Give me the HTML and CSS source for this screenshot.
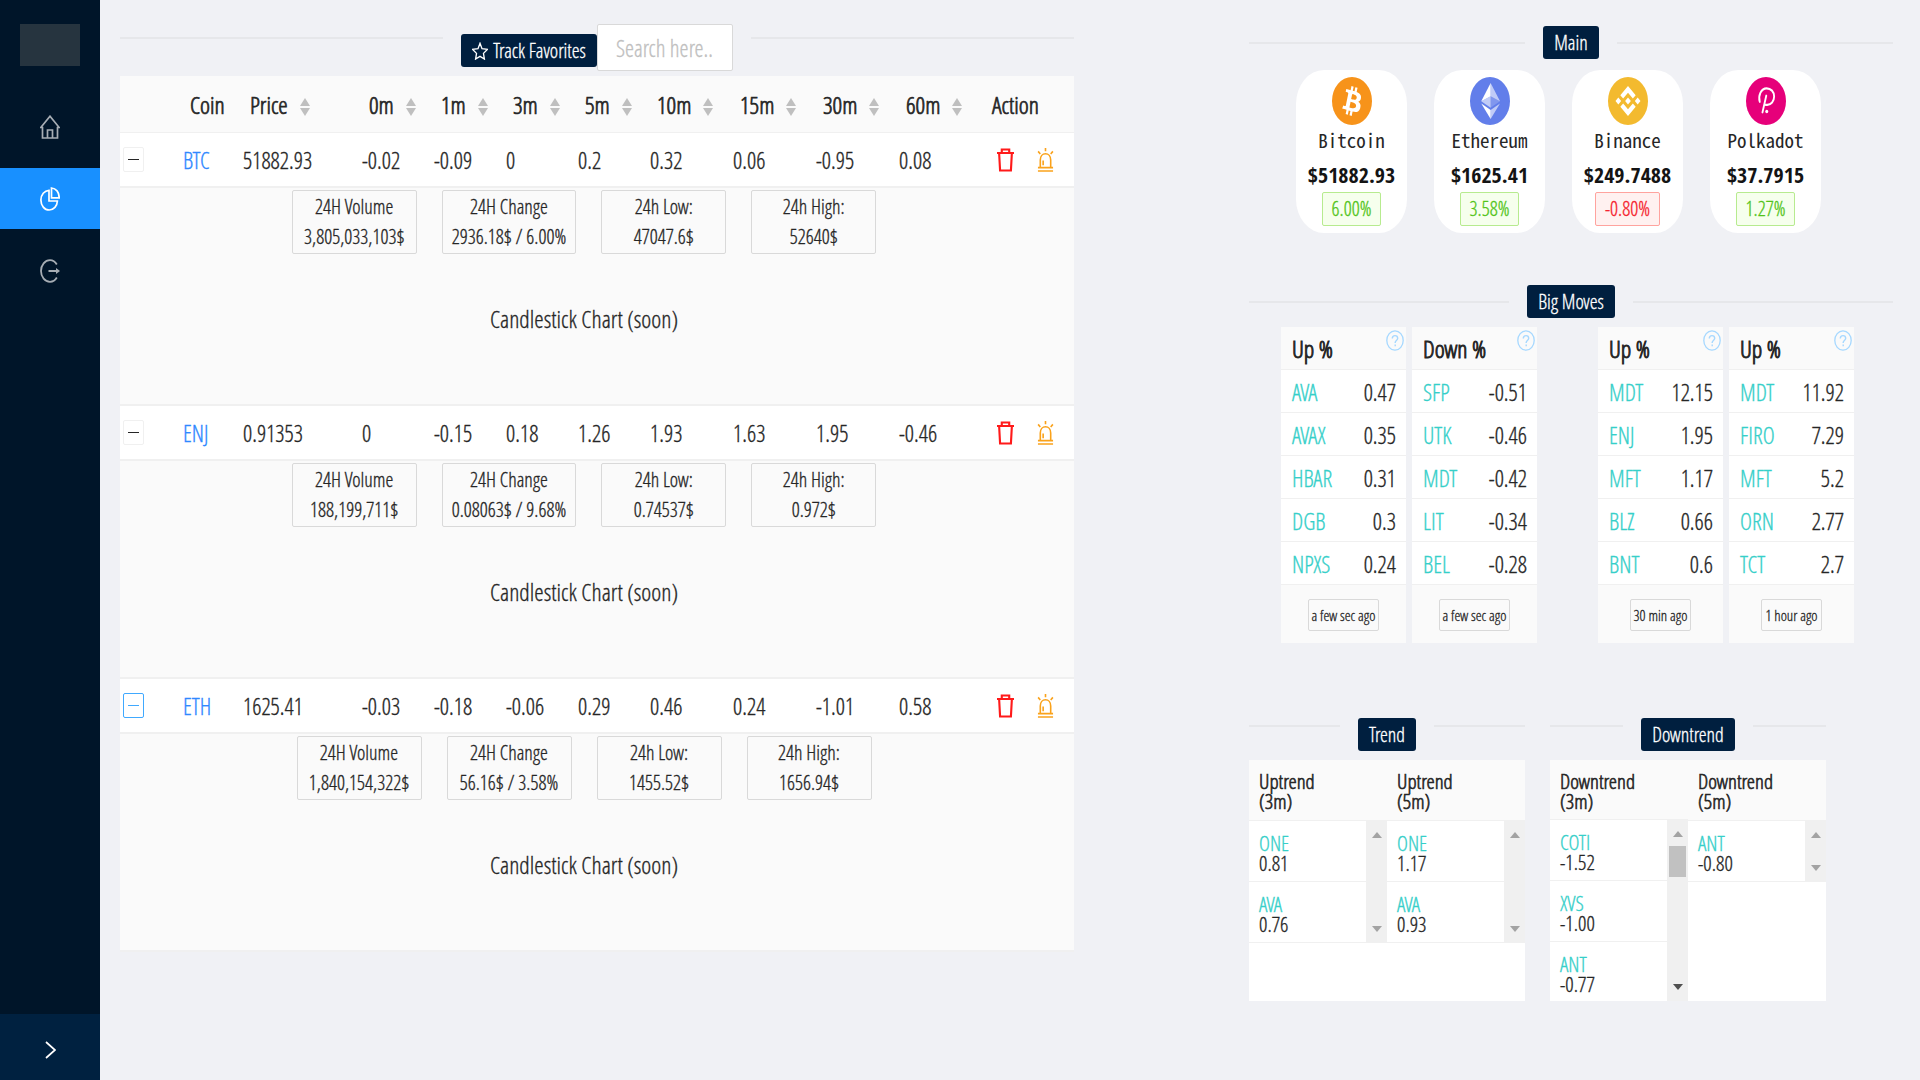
FILE: index.html
```html
<!DOCTYPE html>
<html lang="en">
<head>
<meta charset="utf-8">
<title>Coin Tracker</title>
<link rel="stylesheet" href="styles.css">
</head>
<body>
<svg class="defs" aria-hidden="true">
  <symbol id="i-sort" viewBox="0 0 10 18" preserveAspectRatio="none"><path d="M5 0l5 8H0zM5 18l5-8H0z"/></symbol>
  <symbol id="i-trash" viewBox="0 0 16 24" preserveAspectRatio="none"><path d="M0 5h16M4.500 5V1.500h7V5M2 5l.9 17.500h10.200L14 5" fill="none" stroke="currentColor" stroke-width="2"/></symbol>
  <symbol id="i-siren" viewBox="0 0 18 25" preserveAspectRatio="none"><path d="M3.500 20v-7.500C3.500 8.500 5.800 6 9 6s5.500 2.500 5.500 6.500V20M1 20.500h16M1 24h16M6.500 13v5M9 0v3.500M1.200 3.500l2.300 2.700M16.800 3.500l-2.300 2.700" fill="none" stroke="currentColor" stroke-width="1.700"/></symbol>
  <symbol id="i-help" viewBox="0 0 18 21" preserveAspectRatio="none"><ellipse cx="9" cy="10.500" rx="8.200" ry="9.700" fill="none" stroke="currentColor" stroke-width="1.300"/><path d="M6.300 8.600c0-1.900 1.100-3 2.700-3s2.700 1.100 2.700 2.700c0 2-2.500 2.300-2.500 4.200v.6M9.200 14.600v1.700" fill="none" stroke="currentColor" stroke-width="1.400"/></symbol>
</svg>
<div class="app">
  <aside class="sidebar">
    <div class="logo"></div>
    <nav class="menu">
      <a href="#home" aria-label="Home"><svg viewBox="0 0 20 24" preserveAspectRatio="none"><path d="M.8 12.500L10 1.200l9.200 11.300h-1.700V23h-15V12.500zM7.500 23v-8h5v8" fill="none" stroke="currentColor" stroke-width="1.700"/></svg></a>
      <a href="#stats" class="active" aria-label="Statistics"><svg viewBox="0 0 20 24" preserveAspectRatio="none"><path d="M9 3.300C4.400 3.500.9 7.600.9 13c0 5.600 3.600 10 8.300 10 4.500 0 8-3.900 8.200-9H9zM11.500 1v9.800h7.700C19.200 5.200 16 1.200 11.500 1z" fill="none" stroke="currentColor" stroke-width="1.700"/></svg></a>
      <a href="#logout" aria-label="Log out"><svg viewBox="0 0 20 24" preserveAspectRatio="none"><path d="M16.800 5.500C15.200 2.700 12.800 1.200 10 1.200 5 1.200 1 6 1 12s4 10.800 9 10.800c2.800 0 5.200-1.500 6.800-4.300M8.500 12h9" fill="none" stroke="currentColor" stroke-width="1.800"/><path d="M16 9l4 3-4 3z" fill="currentColor"/></svg></a>
    </nav>
    <button class="trigger" aria-label="Expand menu"><svg viewBox="0 0 11 18"><path d="M1 1l9 8-9 8" fill="none" stroke="currentColor" stroke-width="1.700"/></svg></button>
  </aside>

  <main class="main">
    <section class="tracker">
      <div class="bar">
        <button class="tag"><svg class="star" viewBox="0 0 24 28" preserveAspectRatio="none"><path d="M12 2l3 8.300 8 1.200-5.800 6.200 1.400 8.800L12 22.300l-6.600 4.200 1.400-8.800L1 11.500l8-1.200z" fill="none" stroke="currentColor" stroke-width="2"/></svg>Track Favorites</button>
        <input class="search" type="text" placeholder="Search here.." aria-label="Search">
      </div>
      <table class="coins">
        <colgroup><col class="w-exp"><col class="w-coin"><col class="w-price"><col class="w-min"><col class="w-min"><col class="w-min"><col class="w-min"><col class="w-wide"><col class="w-wide"><col class="w-wide"><col class="w-last"><col class="w-act"></colgroup>
        <thead><tr>
          <th></th><th>Coin</th>
          <th>Price<svg class="sort"><use href="#i-sort"/></svg></th>
          <th>0m<svg class="sort"><use href="#i-sort"/></svg></th>
          <th>1m<svg class="sort"><use href="#i-sort"/></svg></th>
          <th>3m<svg class="sort"><use href="#i-sort"/></svg></th>
          <th>5m<svg class="sort"><use href="#i-sort"/></svg></th>
          <th>10m<svg class="sort"><use href="#i-sort"/></svg></th>
          <th>15m<svg class="sort"><use href="#i-sort"/></svg></th>
          <th>30m<svg class="sort"><use href="#i-sort"/></svg></th>
          <th>60m<svg class="sort"><use href="#i-sort"/></svg></th>
          <th class="act-head">Action</th>
        </tr></thead>
        <tbody>
          <tr class="row"><td class="exp"><button class="toggle" aria-label="Collapse BTC"></button></td><td><a href="#btc">BTC</a></td><td>51882.93</td><td>-0.02</td><td>-0.09</td><td>0</td><td>0.2</td><td>0.32</td><td>0.06</td><td>-0.95</td><td>0.08</td>
            <td class="act"><div class="actions"><button class="del" aria-label="Delete BTC"><svg><use href="#i-trash"/></svg></button><button class="alert" aria-label="Alert BTC"><svg><use href="#i-siren"/></svg></button></div></td></tr>
          <tr class="detail"><td colspan="12"><div class="stats"><div class="stat">24H Volume<br>3,805,033,103$</div><div class="stat">24H Change<br>2936.18$ / 6.00%</div><div class="stat">24h Low:<br>47047.6$</div><div class="stat">24h High:<br>52640$</div></div><p class="chart">Candlestick Chart (soon)</p></td></tr>
          <tr class="row"><td class="exp"><button class="toggle" aria-label="Collapse ENJ"></button></td><td><a href="#enj">ENJ</a></td><td>0.91353</td><td>0</td><td>-0.15</td><td>0.18</td><td>1.26</td><td>1.93</td><td>1.63</td><td>1.95</td><td>-0.46</td>
            <td class="act"><div class="actions"><button class="del" aria-label="Delete ENJ"><svg><use href="#i-trash"/></svg></button><button class="alert" aria-label="Alert ENJ"><svg><use href="#i-siren"/></svg></button></div></td></tr>
          <tr class="detail"><td colspan="12"><div class="stats"><div class="stat">24H Volume<br>188,199,711$</div><div class="stat">24H Change<br>0.08063$ / 9.68%</div><div class="stat">24h Low:<br>0.74537$</div><div class="stat">24h High:<br>0.972$</div></div><p class="chart">Candlestick Chart (soon)</p></td></tr>
          <tr class="row"><td class="exp"><button class="toggle focus" aria-label="Collapse ETH"></button></td><td><a href="#eth">ETH</a></td><td>1625.41</td><td>-0.03</td><td>-0.18</td><td>-0.06</td><td>0.29</td><td>0.46</td><td>0.24</td><td>-1.01</td><td>0.58</td>
            <td class="act"><div class="actions"><button class="del" aria-label="Delete ETH"><svg><use href="#i-trash"/></svg></button><button class="alert" aria-label="Alert ETH"><svg><use href="#i-siren"/></svg></button></div></td></tr>
          <tr class="detail"><td colspan="12"><div class="stats"><div class="stat">24H Volume<br>1,840,154,322$</div><div class="stat">24H Change<br>56.16$ / 3.58%</div><div class="stat">24h Low:<br>1455.52$</div><div class="stat">24h High:<br>1656.94$</div></div><p class="chart">Candlestick Chart (soon)</p></td></tr>
        </tbody>
      </table>
    </section>

    <div class="side">
      <section class="block">
        <h2 class="divider"><span class="tag">Main</span></h2>
        <div class="cards">
          <article class="card">
            <svg class="coin" viewBox="0 0 32 32" preserveAspectRatio="none"><circle cx="16" cy="16" r="16" fill="#f7931a"/><path fill="#fff" d="M23.189 14.020c.314-2.096-1.283-3.223-3.465-3.975l.708-2.840-1.728-.43-.69 2.765c-.454-.114-.92-.22-1.385-.326l.695-2.783L15.596 6l-.708 2.839c-.376-.086-.746-.170-1.104-.26l.002-.009-2.384-.595-.46 1.846s1.283.294 1.256.312c.7.175.826.638.805 1.006l-.806 3.235c.048.012.110.030.180.057l-.183-.045-1.130 4.532c-.086.212-.303.531-.793.410.018.025-1.256-.313-1.256-.313l-.858 1.978 2.250.561c.418.105.828.215 1.231.318l-.715 2.872 1.727.43.708-2.840c.472.127.930.245 1.378.357l-.706 2.828 1.728.43.715-2.866c2.948.558 5.164.333 6.097-2.333.752-2.146-.037-3.385-1.588-4.192 1.130-.260 1.980-1.003 2.207-2.538zm-3.950 5.538c-.533 2.147-4.148.986-5.320.695l.950-3.805c1.172.293 4.929.872 4.370 3.110zm.535-5.569c-.487 1.953-3.495.960-4.470.717l.860-3.450c.975.243 4.118.696 3.610 2.733z"/></svg>
            <span class="name">Bitcoin</span><strong class="price">$51882.93</strong><span class="change up">6.00%</span>
          </article>
          <article class="card">
            <svg class="coin" viewBox="0 0 32 32" preserveAspectRatio="none"><circle cx="16" cy="16" r="16" fill="#627eea"/><g fill="#fff"><path fill-opacity=".6" d="M16.500 4v8.870l7.500 3.350z"/><path d="M16.500 4L9 16.220l7.500-3.350z"/><path fill-opacity=".6" d="M16.500 21.970v6.030L24 17.620z"/><path d="M16.500 28v-6.030L9 17.620z"/><path fill-opacity=".2" d="M16.500 20.570l7.500-4.350-7.500-3.350z"/><path fill-opacity=".6" d="M9 16.220l7.500 4.350v-7.700z"/></g></svg>
            <span class="name">Ethereum</span><strong class="price">$1625.41</strong><span class="change up">3.58%</span>
          </article>
          <article class="card">
            <svg class="coin" viewBox="0 0 32 32" preserveAspectRatio="none"><circle cx="16" cy="16" r="16" fill="#f3ba2f"/><path fill="#fff" d="M12.116 14.404L16 10.520l3.886 3.886 2.260-2.260L16 6l-6.144 6.144zM6 16l2.260-2.260L10.520 16l-2.260 2.260zM12.116 17.596L16 21.480l3.886-3.886 2.260 2.259L16 26l-6.144-6.144zM21.480 16l2.260-2.260L26 16l-2.260 2.260zM18.292 16L16 13.706 13.706 16 16 18.294z"/></svg>
            <span class="name">Binance</span><strong class="price">$249.7488</strong><span class="change down">-0.80%</span>
          </article>
          <article class="card">
            <svg class="coin" viewBox="0 0 32 32" preserveAspectRatio="none"><circle cx="16" cy="16" r="16" fill="#e6007a"/><path fill="none" stroke="#fff" stroke-width="1.500" stroke-linecap="round" d="M11 16.500c-1.400-4 1-9 5.500-9 3.500 0 6 2.500 6 5.500 0 3.300-2.500 5.600-5.500 5.600h-1.200M16.200 12.500L13.200 23.500"/><circle cx="16.600" cy="23" r="1.200" fill="#fff"/></svg>
            <span class="name">Polkadot</span><strong class="price">$37.7915</strong><span class="change up">1.27%</span>
          </article>
        </div>
      </section>

      <section class="block">
        <h2 class="divider"><span class="tag">Big Moves</span></h2>
        <div class="moves">
          <div class="pair">
            <table class="move"><thead><tr><th colspan="2"><div class="mh">Up %<svg class="help"><use href="#i-help"/></svg></div></th></tr></thead>
              <tbody><tr><td><a href="#ava">AVA</a></td><td>0.47</td></tr><tr><td><a href="#avax">AVAX</a></td><td>0.35</td></tr><tr><td><a href="#hbar">HBAR</a></td><td>0.31</td></tr><tr><td><a href="#dgb">DGB</a></td><td>0.3</td></tr><tr><td><a href="#npxs">NPXS</a></td><td>0.24</td></tr></tbody>
              <tfoot><tr><td colspan="2"><span class="ago">a few sec ago</span></td></tr></tfoot></table>
            <table class="move"><thead><tr><th colspan="2"><div class="mh">Down %<svg class="help"><use href="#i-help"/></svg></div></th></tr></thead>
              <tbody><tr><td><a href="#sfp">SFP</a></td><td>-0.51</td></tr><tr><td><a href="#utk">UTK</a></td><td>-0.46</td></tr><tr><td><a href="#mdt">MDT</a></td><td>-0.42</td></tr><tr><td><a href="#lit">LIT</a></td><td>-0.34</td></tr><tr><td><a href="#bel">BEL</a></td><td>-0.28</td></tr></tbody>
              <tfoot><tr><td colspan="2"><span class="ago">a few sec ago</span></td></tr></tfoot></table>
          </div>
          <div class="pair">
            <table class="move"><thead><tr><th colspan="2"><div class="mh">Up %<svg class="help"><use href="#i-help"/></svg></div></th></tr></thead>
              <tbody><tr><td><a href="#mdt">MDT</a></td><td>12.15</td></tr><tr><td><a href="#enj">ENJ</a></td><td>1.95</td></tr><tr><td><a href="#mft">MFT</a></td><td>1.17</td></tr><tr><td><a href="#blz">BLZ</a></td><td>0.66</td></tr><tr><td><a href="#bnt">BNT</a></td><td>0.6</td></tr></tbody>
              <tfoot><tr><td colspan="2"><span class="ago">30 min ago</span></td></tr></tfoot></table>
            <table class="move"><thead><tr><th colspan="2"><div class="mh">Up %<svg class="help"><use href="#i-help"/></svg></div></th></tr></thead>
              <tbody><tr><td><a href="#mdt">MDT</a></td><td>11.92</td></tr><tr><td><a href="#firo">FIRO</a></td><td>7.29</td></tr><tr><td><a href="#mft">MFT</a></td><td>5.2</td></tr><tr><td><a href="#orn">ORN</a></td><td>2.77</td></tr><tr><td><a href="#tct">TCT</a></td><td>2.7</td></tr></tbody>
              <tfoot><tr><td colspan="2"><span class="ago">1 hour ago</span></td></tr></tfoot></table>
          </div>
        </div>
      </section>

      <div class="trends">
        <section>
          <h2 class="divider high"><span class="tag">Trend</span></h2>
          <div class="lists">
            <div class="list"><h3>Uptrend<br>(3m)</h3><div class="scroll"><ul><li><a href="#one">ONE</a><br>0.81</li><li><a href="#ava">AVA</a><br>0.76</li></ul><div class="track"><i class="arr"></i><i class="arr dn"></i></div></div></div>
            <div class="list"><h3>Uptrend<br>(5m)</h3><div class="scroll"><ul><li><a href="#one">ONE</a><br>1.17</li><li><a href="#ava">AVA</a><br>0.93</li></ul><div class="track"><i class="arr"></i><i class="arr dn"></i></div></div></div>
          </div>
        </section>
        <section>
          <h2 class="divider high"><span class="tag">Downtrend</span></h2>
          <div class="lists">
            <div class="list"><h3>Downtrend<br>(3m)</h3><div class="scroll"><ul><li><a href="#coti">COTI</a><br>-1.52</li><li><a href="#xvs">XVS</a><br>-1.00</li><li><a href="#ant">ANT</a><br>-0.77</li></ul><div class="track"><i class="arr"></i><i class="thumb"></i><i class="arr dn live"></i></div></div></div>
            <div class="list"><h3>Downtrend<br>(5m)</h3><div class="scroll"><ul><li><a href="#ant">ANT</a><br>-0.80</li></ul><div class="track"><i class="arr"></i><i class="arr dn"></i></div></div></div>
          </div>
        </section>
      </div>
    </div>
  </main>
</div>
</body>
</html>
```
FILE: styles.css
```css
:root {
  --text: "Open Sans Condensed Light", "Roboto Condensed", "Open Sans", sans-serif;
  --bold: "Open Sans Condensed", "Roboto Condensed", "Open Sans", sans-serif;
  --mono: "Noto Sans Mono CJK SC", "Liberation Mono", monospace;
  --ink: #262626;
  --navy: #001f3f;
  --line: #f0f0f0;
}
* { box-sizing: border-box; }
body { margin: 0; background: #f0f1f5; color: var(--ink); font: 23px/30px var(--text); -webkit-text-stroke: 0.3px; }
h2, h3, p, ul { margin: 0; padding: 0; font-weight: normal; }
ul { list-style: none; }
a { color: #36cfc9; text-decoration: none; }
button, input { font: inherit; color: inherit; margin: 0; }
button { padding: 0; border: 0; background: none; cursor: pointer; -webkit-text-stroke: inherit; }
svg { display: block; }
.defs { display: none; }

.app { display: flex; min-height: 100vh; }

/* Sidebar */
.sidebar { flex: none; width: 100px; display: flex; flex-direction: column; background: #001529; color: #a6adb4; }
.logo { height: 42px; margin: 24px 20px 30px; background: #26343f; }
.menu { display: flex; flex-direction: column; gap: 11px; }
.menu a { display: flex; align-items: center; justify-content: center; height: 61px; color: inherit; }
.menu svg { width: 20px; height: 24px; }
.menu .active { background: #1890ff; color: #fff; }
.trigger { display: flex; align-items: center; justify-content: center; height: 66px; margin-top: auto; padding-top: 6px; background: #002140; color: #fff; }
.trigger svg { width: 11px; height: 18px; }

.main { flex: 1; display: grid; grid-template-columns: 954fr 644fr; column-gap: 175px; align-items: start; padding: 24px 27px 24px 20px; }

/* Shared dividers and tags */
.tag { display: flex; align-items: center; height: 33px; padding: 0 11px; border-radius: 3px; background: var(--navy); color: #fff; font-size: 20px; white-space: nowrap; }
.divider, .bar { display: flex; align-items: center; }
.divider { gap: 18px; font-size: 20px; }
.divider::before, .divider::after, .bar::before, .bar::after { content: ""; flex: 1; height: 2px; background: #e6e7ea; }
.divider.high, .bar { align-items: flex-start; }
.divider.high::before, .divider.high::after { margin-top: 7px; }
.bar { margin-bottom: 5px; }
.bar::before, .bar::after { margin-top: 13px; }
.bar::before { margin-right: 18px; }
.bar::after { margin-left: 18px; }
.bar .tag { margin-top: 10px; }
.star { width: 16px; height: 18px; margin-right: 5px; }
.search { width: 136px; height: 47px; padding: 0 18px; border: 1px solid #d9d9d9; border-radius: 2px; background: #fff; -webkit-text-stroke: inherit; }
.search::placeholder { color: #bfbfbf; opacity: 1; }

/* Coin table */
.coins { width: 100%; table-layout: fixed; border-collapse: separate; border-spacing: 0; background: #fafafa; }
.w-exp { width: 55px; }
.w-coin { width: 60px; }
.w-price { width: 119px; }
.w-min { width: 72px; }
.w-wide { width: 83px; }
.w-last { width: 93px; }
.w-act { width: 90px; }
.coins th, .coins td { padding: 0 0 0 8px; text-align: left; white-space: nowrap; }
.coins th { height: 57px; padding: 2px 0 0 15px; border-bottom: 1px solid var(--line); font-size: 24px; font-weight: normal; -webkit-text-stroke: 0.7px; }
.coins th.act-head { padding-left: 8px; }
.coins td.exp { padding-left: 3px; }
.coins .row td { height: 55px; background: #fff; border-bottom: 2px solid var(--line); }
.row a { color: #2f88ff; }
.sort { display: inline-block; width: 10px; height: 18px; margin-left: 12px; vertical-align: -2px; fill: #bfbfbf; }
.toggle { display: flex; align-items: center; justify-content: center; width: 21px; height: 25px; border: 1px solid var(--line); border-radius: 2px; background: #fff; }
.toggle::before { content: ""; width: 11px; height: 1px; background: currentColor; }
.toggle.focus { border-color: #40a9ff; color: #40a9ff; }
.actions { display: flex; gap: 23px; padding-left: 5px; }
.actions svg { width: 17px; height: 24px; }
.del { color: #ff1a1a; }
.alert { color: #faa21b; }
.coins .detail td { height: 218px; padding: 2px 26px 0 0; border-bottom: 2px solid var(--line); vertical-align: top; }
.stats { display: flex; justify-content: center; gap: 25px; }
.stat { min-width: 125px; height: 64px; padding: 1px 9px; border: 1px solid #d9d9d9; border-radius: 2px; font-size: 20px; text-align: center; }
.chart { margin-top: 50px; font-size: 24px; text-align: center; }

/* Right-hand column */
.side { min-width: 0; padding-top: 2px; }
.block { margin-bottom: 52px; }
.cards { display: flex; gap: 27px; padding: 11px 0 0 47px; }
.card { flex: none; width: 111px; height: 163px; display: flex; flex-direction: column; align-items: center; padding-top: 7px; border-radius: 28px / 34px; background: #fff; }
.coin { width: 40px; height: 48px; }
.name { height: 32px; line-height: 30px; font-family: var(--mono); font-size: 19px; -webkit-text-stroke: 0; }
.price { height: 35px; line-height: 34px; font-family: var(--bold); font-size: 22px; color: #141414; -webkit-text-stroke: 0; }
.change { height: 34px; padding: 0 9px; border: 1px solid; border-radius: 2px; font-size: 20px; line-height: 32px; }
.up { color: #52c41a; background: #f6ffed; border-color: #b7eb8f; }
.down { color: #f5222d; background: #fff1f0; border-color: #ffa39e; }

.moves { display: flex; gap: 61px; padding: 9px 0 0 32px; }
.pair { display: flex; align-items: flex-start; gap: 6px; }
.move { width: 125px; border-collapse: separate; border-spacing: 0; background: #fafafa; }
.move th, .move td { height: 43px; padding: 0; border-bottom: 1px solid var(--line); }
.move tbody td { padding: 2px 0 0 11px; background: #fff; }
.move tbody td + td { padding: 2px 10px 0 0; text-align: right; }
.mh { display: flex; align-items: flex-start; justify-content: space-between; height: 42px; padding: 7px 2px 0 11px; }
.move th { font-size: 24px; font-weight: normal; -webkit-text-stroke: 0.9px; }
.help { width: 18px; height: 21px; margin-top: -4px; color: #a6d8ff; }
.move tfoot td { height: 58px; border: 0; text-align: center; }
.ago { display: inline-block; height: 32px; padding: 0 3px; border: 1px solid #d9d9d9; border-radius: 2px; font-size: 15px; line-height: 30px; }

.trends { display: flex; gap: 25px; margin-top: 75px; }
.trends section { width: 276px; }
.lists { display: flex; height: 241px; margin-top: 9px; background: #fff; }
.list { flex: 1; display: flex; flex-direction: column; font-size: 21px; line-height: 20px; }
.list h3 { height: 61px; padding: 11px 10px 0; border-bottom: 1px solid var(--line); background: #fafafa; font-size: inherit; -webkit-text-stroke: 0.6px; }
.scroll { display: flex; min-height: 0; overflow: hidden; }
.scroll ul { flex: 1; }
.scroll li { height: 61px; padding: 12px 0 0 10px; border-bottom: 1px solid var(--line); }
.track { display: flex; flex-direction: column; align-items: center; width: 21px; padding: 11px 0; background: #f0f0f0; }
.arr { width: 0; height: 0; border: solid transparent; border-width: 0 5px 6px; border-bottom-color: #a3a3a3; }
.dn { margin-top: auto; border-width: 6px 5px 0; border-top-color: #a3a3a3; }
.live { border-top-color: #505050; }
.thumb { width: 17px; height: 31px; margin-top: 9px; background: #c1c1c1; }
```
